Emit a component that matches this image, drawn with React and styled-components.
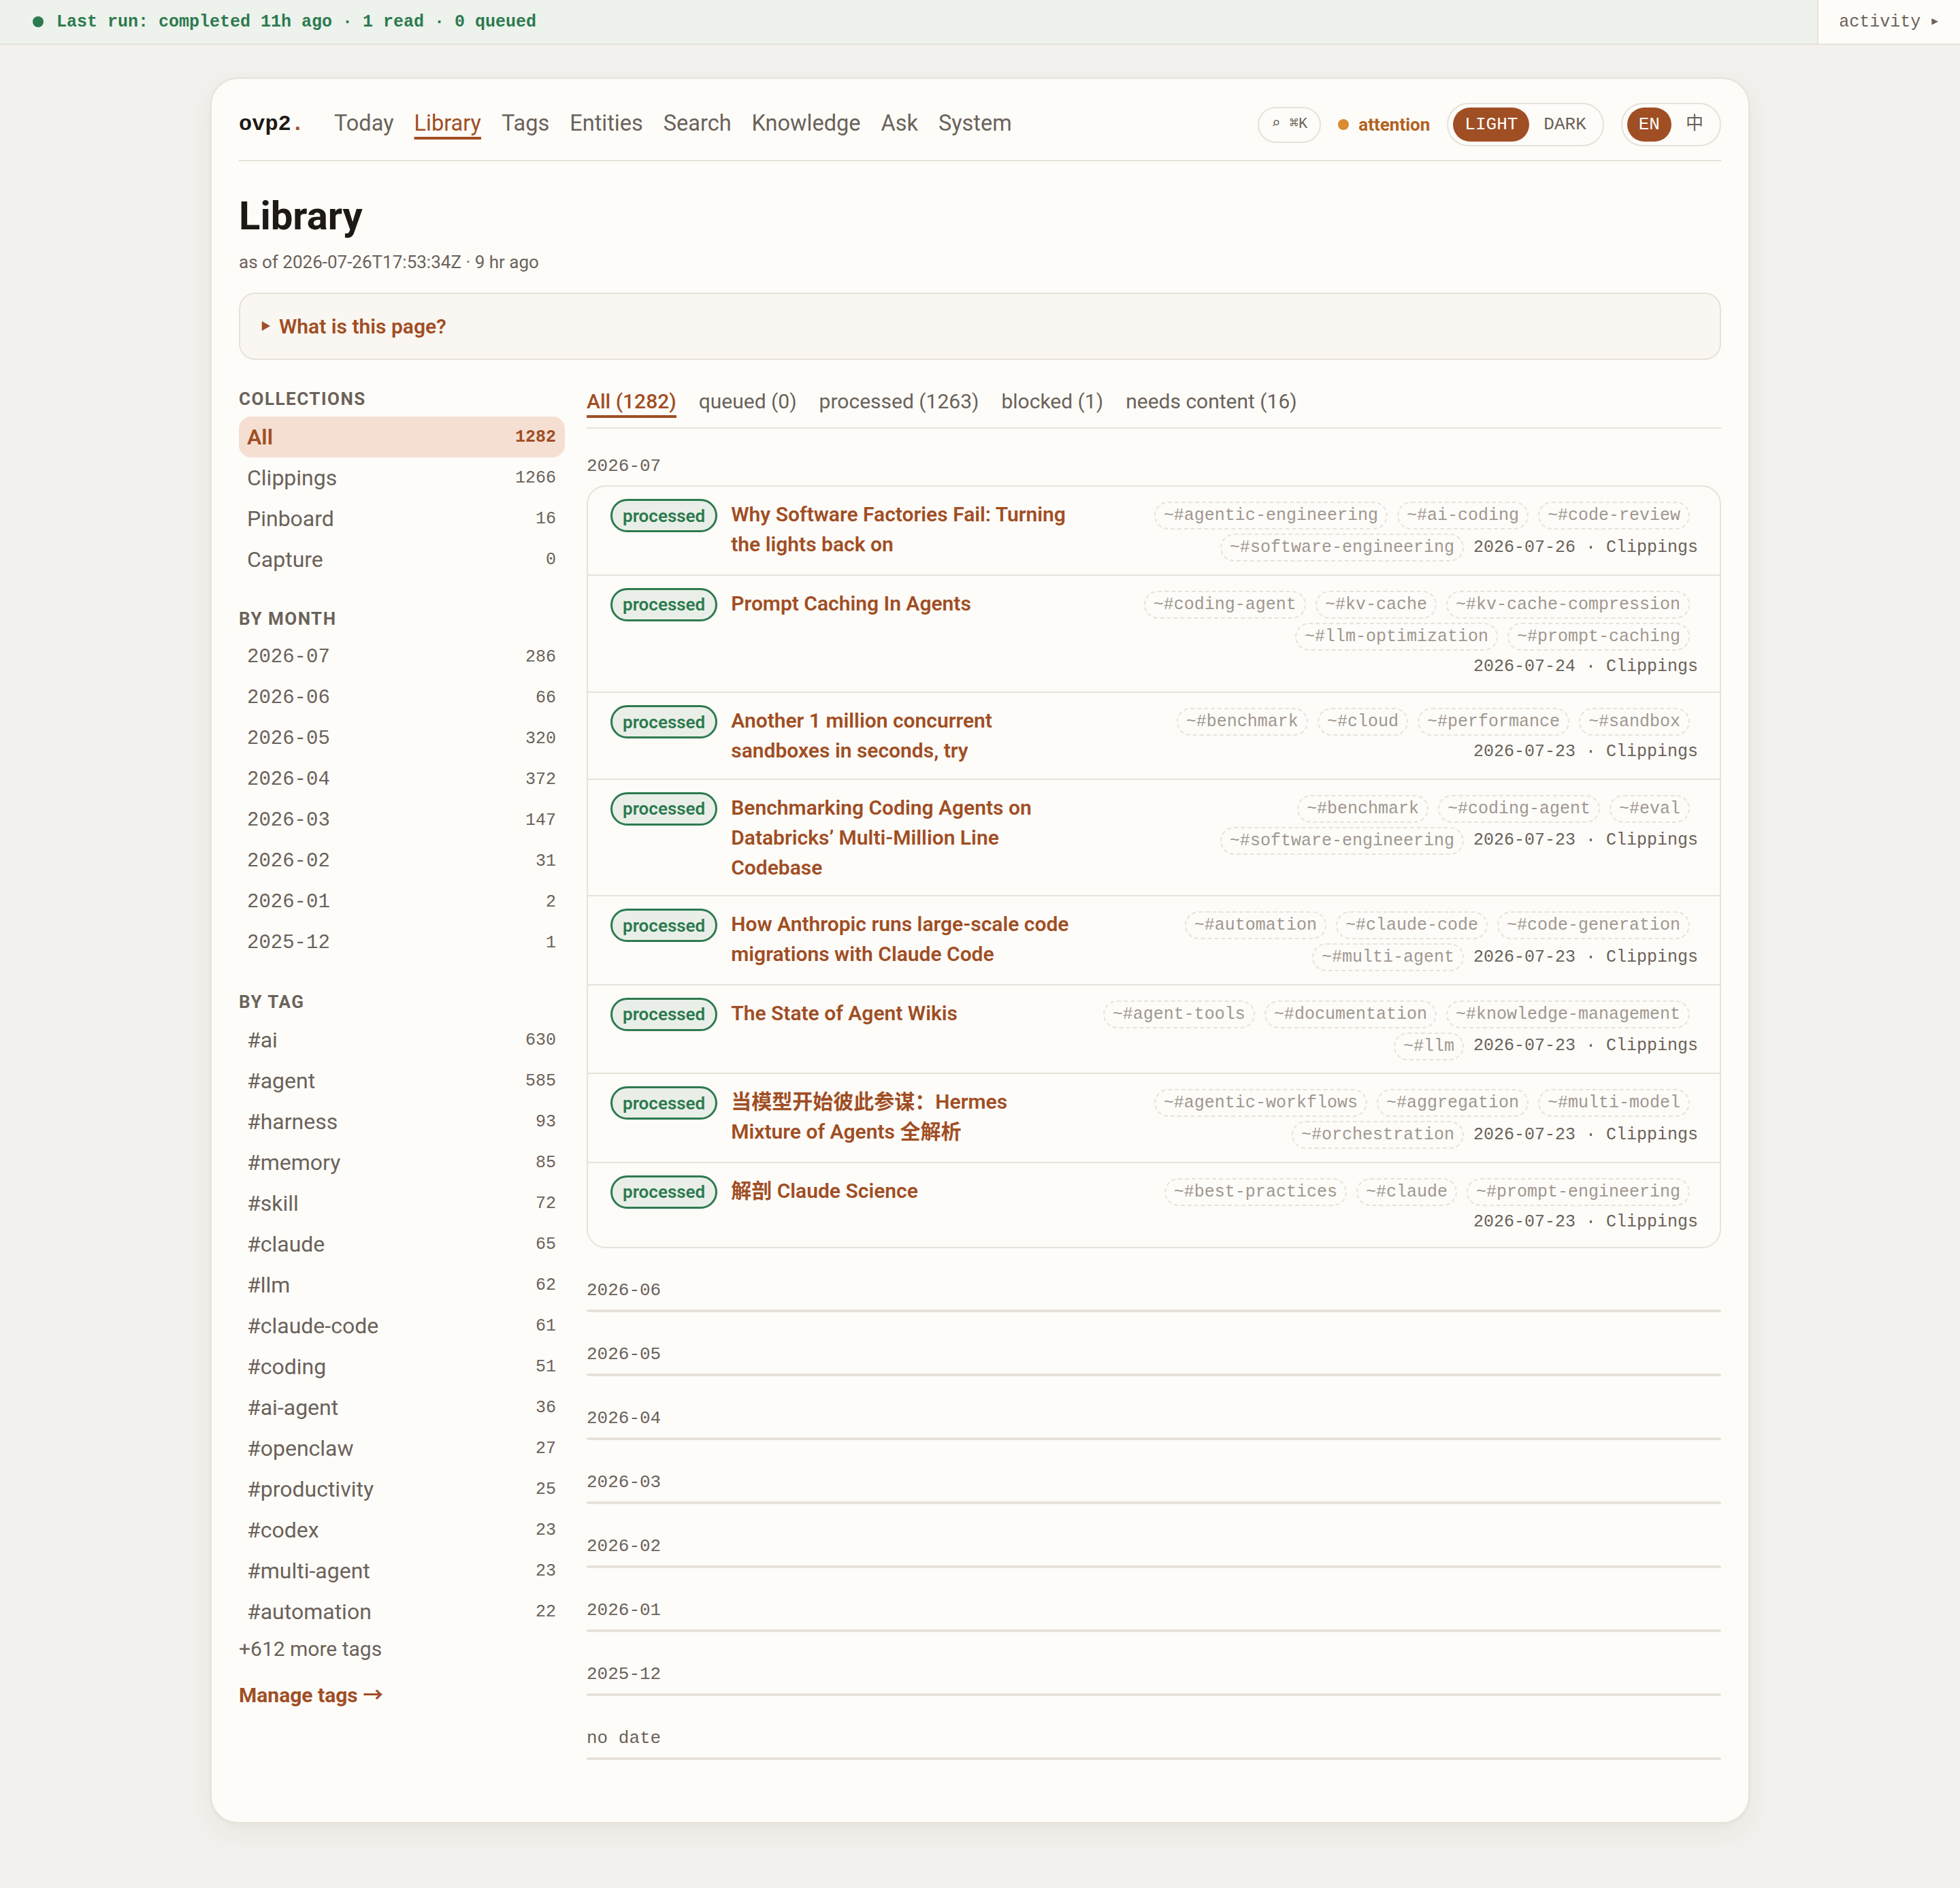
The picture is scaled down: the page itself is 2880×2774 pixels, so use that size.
import React from "react";
import styled, { createGlobalStyle } from "styled-components";

const sans = `Roboto, "Noto Sans CJK SC", sans-serif`;
const mono = `"Liberation Mono", "DejaVu Sans Mono", "Noto Sans CJK SC", monospace`;

const c = {
  page: "#f3f1ed",
  card: "#fdfcf9",
  line: "#e8e2d9",
  ink: "#1e1915",
  muted: "#6b625a",
  faint: "#a1978f",
  rust: "#a04e24",
  rustSoft: "#f5dfd3",
  green: "#2d7a4f",
  greenSoft: "#e9efe8",
  amber: "#d98b31",
};

const GlobalStyle = createGlobalStyle`
  html, body { margin: 0; background: ${c.page}; }
  body { font-family: ${sans}; color: ${c.ink}; -webkit-font-smoothing: antialiased; }
  * { box-sizing: border-box; }
`;

const TopBar = styled.header`
  display: flex;
  align-items: stretch;
  height: 66px;
  background: #edf2ec;
  border-bottom: 2px solid ${c.line};
`;

const RunStatus = styled.div`
  flex: 1;
  display: flex;
  align-items: center;
  gap: 19px;
  padding-left: 48px;
  font: 700 25px/1 ${mono};
  color: ${c.green};
`;

const StatusDot = styled.span`
  width: 16px;
  height: 16px;
  border-radius: 50%;
  background: ${c.green};
`;

const ActivityToggle = styled.div`
  display: flex;
  align-items: center;
  gap: 16px;
  padding: 0 32px 0 30px;
  background: ${c.card};
  border-left: 2px solid ${c.line};
  font: 500 25px/1 ${mono};
  color: ${c.muted};
  span { font-size: 16px; }
`;

const Page = styled.main`
  padding: 48px 0 98px;
`;

const Card = styled.div`
  width: 2262px;
  margin: 0 auto;
  background: ${c.card};
  border: 2px solid ${c.line};
  border-radius: 40px;
  padding: 35px 40px 91px;
  box-shadow: 0 14px 40px rgba(70, 50, 30, 0.06), 0 2px 4px rgba(70, 50, 30, 0.03);
`;

const Nav = styled.nav`
  display: flex;
  align-items: center;
  height: 86px;
  padding-bottom: 20px;
  border-bottom: 2px solid ${c.line};
`;

const Brand = styled.div`
  font: 600 32px/1 ${mono};
  color: ${c.ink};
  margin-right: 44px;
  span { color: ${c.rust}; }
`;

const NavLinks = styled.div`
  display: flex;
  gap: 30px;
  margin-top: -4px;
`;

const NavLink = styled.a`
  font: 400 32.5px/1.2 ${sans};
  color: ${(p) => (p.$active ? c.rust : c.muted)};
  text-decoration: ${(p) => (p.$active ? "underline" : "none")};
  text-decoration-thickness: 4px;
  text-underline-offset: 9px;
`;

const NavRight = styled.div`
  margin-left: auto;
  display: flex;
  align-items: center;
  gap: 25px;
`;

const KbdPill = styled.div`
  height: 53px;
  display: flex;
  align-items: center;
  padding: 0 18px;
  border: 2px solid ${c.line};
  border-radius: 27px;
  font: 400 22px/1 ${mono};
  color: ${c.muted};
`;

const Attention = styled.div`
  display: flex;
  align-items: center;
  gap: 14px;
  font: 700 26px/1 ${sans};
  color: #b1611d;
  &::before {
    content: "";
    width: 16px;
    height: 16px;
    border-radius: 50%;
    background: ${c.amber};
  }
`;

const Segmented = styled.div`
  display: flex;
  gap: 4px;
  height: 64px;
  padding: 5px 7px;
  border: 2px solid ${c.line};
  border-radius: 32px;
`;

const Seg = styled.span`
  display: flex;
  align-items: center;
  height: 50px;
  padding: 0 17px;
  border-radius: 25px;
  font: 400 26px/1 ${mono};
  background: ${(p) => (p.$active ? c.rust : "transparent")};
  color: ${(p) => (p.$active ? "#fff" : c.muted)};
`;

const Title = styled.h1`
  margin: 45px 0 0;
  font: 700 58px/70px ${sans};
  color: ${c.ink};
`;

const AsOf = styled.div`
  margin-top: 17px;
  font: 400 26px/32px ${sans};
  color: ${c.muted};
`;

const Disclosure = styled.div`
  margin-top: 29px;
  height: 99px;
  display: flex;
  align-items: center;
  gap: 12px;
  padding: 0 30px;
  background: #faf6f1;
  border: 2px solid ${c.line};
  border-radius: 24px;
  font: 600 30px/1 ${sans};
  color: ${c.rust};
  span { font-size: 15px; }
`;

const Columns = styled.div`
  display: flex;
  gap: 32px;
  margin-top: 41px;
  align-items: flex-start;
`;

const Sidebar = styled.aside`
  flex: 0 0 479px;
`;

const SideLabel = styled.h3`
  margin: 41px 0 10px;
  font: 700 26px/32px ${sans};
  letter-spacing: 1.5px;
  color: ${c.muted};
  &:first-child { margin-top: 0; }
`;

const SideItem = styled.div`
  display: flex;
  align-items: center;
  justify-content: space-between;
  height: 60px;
  padding: 0 13px 0 12px;
  border-radius: 18px;
  background: ${(p) => (p.$active ? c.rustSoft : "transparent")};
  color: ${(p) => (p.$active ? c.rust : c.muted)};
  font: ${(p) => (p.$active ? 600 : 400)} ${(p) => (p.$mono ? `29px ${mono}` : `32px ${sans}`)};
`;

const Count = styled.span`
  font: ${(p) => (p.$active ? 700 : 400)} 25px/1 ${mono};
`;

const MoreTags = styled.div`
  margin-top: 5px;
  font: 400 30px/40px ${sans};
  color: ${c.muted};
`;

const ManageLink = styled.a`
  display: block;
  margin-top: 28px;
  font: 700 30px/40px ${sans};
  color: ${c.rust};
`;

const MainCol = styled.section`
  flex: 1;
  min-width: 0;
`;

const Tabs = styled.div`
  display: flex;
  gap: 33px;
  padding-bottom: 14px;
  border-bottom: 2px solid ${c.line};
`;

const Tab = styled.span`
  font: ${(p) => (p.$active ? 500 : 400)} 30px/40px ${sans};
  color: ${(p) => (p.$active ? c.rust : c.muted)};
  border-bottom: 4px solid ${(p) => (p.$active ? c.rust : "transparent")};
`;

const MonthGroup = styled.div`
  margin-top: ${(p) => (p.$first ? 39 : 46)}px;
`;

const MonthLabel = styled.div`
  margin-bottom: 12px;
  font: 400 26px/32px ${mono};
  color: ${c.muted};
`;

const List = styled.div`
  border: 2px solid ${c.line};
  border-radius: 28px;
  overflow: hidden;
`;

const Row = styled.div`
  display: flex;
  align-items: flex-start;
  padding: 18px 32px 18.5px 33px;
  & + & { border-top: 2px solid ${c.line}; }
`;

const Badge = styled.span`
  flex: none;
  display: inline-flex;
  align-items: center;
  height: 49px;
  padding: 0 15px;
  margin-right: 20px;
  border: 3px solid ${c.green};
  border-radius: 25px;
  background: ${c.greenSoft};
  color: ${c.green};
  font: 600 26px/1 ${sans};
`;

const ItemTitle = styled.a`
  flex: 1;
  min-width: 0;
  padding-top: 1px;
  font: 600 30px/44px ${sans};
  color: ${c.rust};
`;

const TagArea = styled.div`
  flex: 0 0 886px;
  margin-left: 24px;
  padding-top: 4px;
  display: flex;
  flex-wrap: wrap;
  justify-content: flex-end;
  align-items: center;
  row-gap: 6px;
  column-gap: 2px;
`;

const Chip = styled.span`
  display: inline-flex;
  align-items: center;
  height: 41px;
  padding: 0 12px;
  margin-right: 12px;
  border: 2px dashed #e8e3db;
  border-radius: 21px;
  font: 400 25px/1 ${mono};
  color: ${c.faint};
  white-space: nowrap;
`;

const Meta = styled.span`
  font: 400 25px/36px ${mono};
  color: ${c.muted};
  white-space: nowrap;
`;

const EmptyRule = styled.div`
  height: 4px;
  border-radius: 2px;
  background: ${c.line};
`;

const navItems = ["Today", "Library", "Tags", "Entities", "Search", "Knowledge", "Ask", "System"];

const collections = [
  ["All", 1282],
  ["Clippings", 1266],
  ["Pinboard", 16],
  ["Capture", 0],
];

const months = [
  ["2026-07", 286],
  ["2026-06", 66],
  ["2026-05", 320],
  ["2026-04", 372],
  ["2026-03", 147],
  ["2026-02", 31],
  ["2026-01", 2],
  ["2025-12", 1],
];

const tags = [
  ["#ai", 630],
  ["#agent", 585],
  ["#harness", 93],
  ["#memory", 85],
  ["#skill", 72],
  ["#claude", 65],
  ["#llm", 62],
  ["#claude-code", 61],
  ["#coding", 51],
  ["#ai-agent", 36],
  ["#openclaw", 27],
  ["#productivity", 25],
  ["#codex", 23],
  ["#multi-agent", 23],
  ["#automation", 22],
];

const tabs = ["All (1282)", "queued (0)", "processed (1263)", "blocked (1)", "needs content (16)"];

const items = [
  {
    title: "Why Software Factories Fail: Turning the lights back on",
    tags: ["agentic-engineering", "ai-coding", "code-review", "software-engineering"],
    date: "2026-07-26",
  },
  {
    title: "Prompt Caching In Agents",
    tags: ["coding-agent", "kv-cache", "kv-cache-compression", "llm-optimization", "prompt-caching"],
    date: "2026-07-24",
  },
  {
    title: "Another 1 million concurrent sandboxes in seconds, try",
    tags: ["benchmark", "cloud", "performance", "sandbox"],
    date: "2026-07-23",
  },
  {
    title: "Benchmarking Coding Agents on Databricks’ Multi-Million Line Codebase",
    tags: ["benchmark", "coding-agent", "eval", "software-engineering"],
    date: "2026-07-23",
  },
  {
    title: "How Anthropic runs large-scale code migrations with Claude Code",
    tags: ["automation", "claude-code", "code-generation", "multi-agent"],
    date: "2026-07-23",
  },
  {
    title: "The State of Agent Wikis",
    tags: ["agent-tools", "documentation", "knowledge-management", "llm"],
    date: "2026-07-23",
  },
  {
    title: "当模型开始彼此参谋：Hermes Mixture of Agents 全解析",
    tags: ["agentic-workflows", "aggregation", "multi-model", "orchestration"],
    date: "2026-07-23",
  },
  {
    title: "解剖 Claude Science",
    tags: ["best-practices", "claude", "prompt-engineering"],
    date: "2026-07-23",
  },
];

const emptyMonths = ["2026-06", "2026-05", "2026-04", "2026-03", "2026-02", "2026-01", "2025-12", "no date"];

export default function App() {
  return (
    <>
      <GlobalStyle />
      <TopBar>
        <RunStatus>
          <StatusDot />
          Last run: completed 11h ago · 1 read · 0 queued
        </RunStatus>
        <ActivityToggle>
          activity <span>▶</span>
        </ActivityToggle>
      </TopBar>

      <Page>
        <Card>
          <Nav>
            <Brand>
              ovp2<span>.</span>
            </Brand>
            <NavLinks>
              {navItems.map((n) => (
                <NavLink key={n} $active={n === "Library"}>
                  {n}
                </NavLink>
              ))}
            </NavLinks>
            <NavRight>
              <KbdPill>⌕ ⌘K</KbdPill>
              <Attention>attention</Attention>
              <Segmented>
                <Seg $active>LIGHT</Seg>
                <Seg>DARK</Seg>
              </Segmented>
              <Segmented>
                <Seg $active>EN</Seg>
                <Seg>中</Seg>
              </Segmented>
            </NavRight>
          </Nav>

          <Title>Library</Title>
          <AsOf>as of 2026-07-26T17:53:34Z · 9 hr ago</AsOf>

          <Disclosure>
            <span>▶</span>
            What is this page?
          </Disclosure>

          <Columns>
            <Sidebar>
              <SideLabel>COLLECTIONS</SideLabel>
              {collections.map(([name, n]) => (
                <SideItem key={name} $active={name === "All"}>
                  {name}
                  <Count $active={name === "All"}>{n}</Count>
                </SideItem>
              ))}

              <SideLabel>BY MONTH</SideLabel>
              {months.map(([name, n]) => (
                <SideItem key={name} $mono>
                  {name}
                  <Count>{n}</Count>
                </SideItem>
              ))}

              <SideLabel>BY TAG</SideLabel>
              {tags.map(([name, n]) => (
                <SideItem key={name}>
                  {name}
                  <Count>{n}</Count>
                </SideItem>
              ))}
              <MoreTags>+612 more tags</MoreTags>
              <ManageLink>Manage tags →</ManageLink>
            </Sidebar>

            <MainCol>
              <Tabs>
                {tabs.map((t, i) => (
                  <Tab key={t} $active={i === 0}>
                    {t}
                  </Tab>
                ))}
              </Tabs>

              <MonthGroup $first>
                <MonthLabel>2026-07</MonthLabel>
                <List>
                  {items.map((it) => (
                    <Row key={it.title}>
                      <Badge>processed</Badge>
                      <ItemTitle>{it.title}</ItemTitle>
                      <TagArea>
                        {it.tags.map((t) => (
                          <Chip key={t}>~#{t}</Chip>
                        ))}
                        <Meta>{it.date} · Clippings</Meta>
                      </TagArea>
                    </Row>
                  ))}
                </List>
              </MonthGroup>

              {emptyMonths.map((m) => (
                <MonthGroup key={m}>
                  <MonthLabel>{m}</MonthLabel>
                  <EmptyRule />
                </MonthGroup>
              ))}
            </MainCol>
          </Columns>
        </Card>
      </Page>
    </>
  );
}
